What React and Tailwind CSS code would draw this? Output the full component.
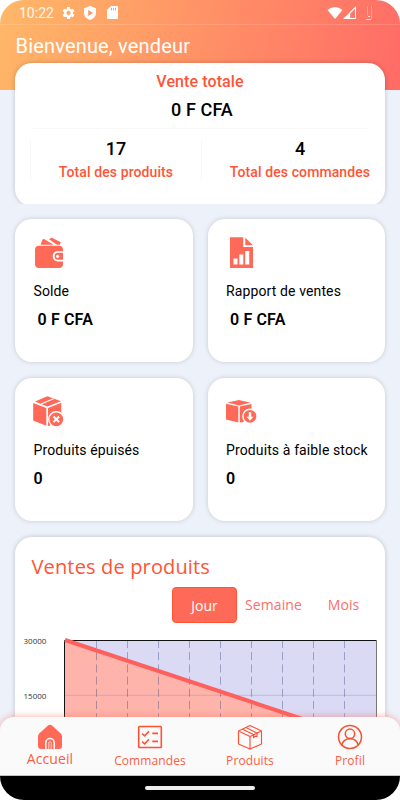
const stats = [
  { label: 'Solde', value: '0 F CFA', icon: WalletIcon, indent: true },
  { label: 'Rapport de ventes', value: '0 F CFA', icon: ReportIcon, indent: true },
  { label: 'Produits épuisés', value: '0', icon: SoldOutIcon },
  { label: 'Produits à faible stock', value: '0', icon: LowStockIcon },
]

const tabs = [
  { label: 'Accueil', icon: HomeIcon, active: true },
  { label: 'Commandes', icon: OrdersIcon },
  { label: 'Produits', icon: ProductsIcon },
  { label: 'Profil', icon: ProfileIcon },
]

const gridColumns = [96.5, 127.5, 158.5, 189.5, 220.5, 251.5, 282.5, 313.5, 344.5]

function WalletIcon() {
  return (
    <svg width="32" height="32" viewBox="0 0 32 32" fill="#ff6957">
      <path d="M6.5 7.700 8.600 2.600Q9 1.800 10 2.100L19.500 7.700Z" />
      <path d="m15 2.300 2-1.400q.6-.4 1.400 0l7.600 3.900q.8.400.5 1.200l-.6 1.700H23Z" />
      <path d="M5 8.800h20q4 0 4 4v1.400h-5.500a4.800 4.800 0 0 0-4.800 4.800v.600a4.800 4.800 0 0 0 4.800 4.800H29V27q0 4-4 4H5q-4 0-4-4V12.800q0-4 4-4Z" />
      <path d="M29 15.800h-5a3.300 3.300 0 0 0-3.300 3.300v.4a3.300 3.300 0 0 0 3.300 3.300h5Z" />
      <circle cx="23.600" cy="19.300" r="1.600" fill="#fff" />
    </svg>
  )
}

function ReportIcon() {
  return (
    <svg width="32" height="32" viewBox="0 0 32 32">
      <path fill="#ff6957" d="M4 .3h13.200v9.700H27v21H4Z M19.300.8 27 8.300h-7.700Z" />
      <path fill="#fff" d="M7.500 21.500h4V27.500h-4Z M13.300 17.500h4v10h-4Z M19.200 14h4v13.500h-4Z" />
    </svg>
  )
}

function SoldOutIcon() {
  return (
    <svg className="-ml-0.5" width="32" height="32" viewBox="-1 0 32 32">
      <path fill="#ff6957" d="M.2 6.900 13.300 12v17.700L.2 24.400Z M15 12l13.300-5.200v14L17 29.500l-2 .5Z" />
      <path fill="#ff6957" d="m2 5.500 12.300 5.100L28 5.200 14.500.2Z" />
      <path stroke="#fff" strokeWidth="1.300" d="M8.200 8 21 2.500" />
      <circle cx="23.300" cy="23.300" r="7.600" fill="#ff6957" stroke="#fff" strokeWidth="1.400" />
      <path stroke="#fff" strokeWidth="2" d="m20.500 20.500 5.600 5.600m0-5.600-5.600 5.600" />
    </svg>
  )
}

function LowStockIcon() {
  return (
    <svg width="32" height="32" viewBox="0 0 32 32">
      <path fill="#ff6957" d="M1.500 6.500 13 4l11.500 2.800L13 9.500Z" />
      <path fill="#ff6957" d="m0 7.800 12.300 2.800v16L0 23.600Z M13.800 10.600 25.500 8v12l-9 6.200-2.700.4Z" />
      <circle cx="24" cy="20.300" r="7.100" fill="#ff6957" stroke="#fff" strokeWidth="1.500" />
      <path fill="#fff" d="M22.800 16.300h2.400v4.500h2.200l-3.400 4-3.400-4h2.200Z" />
    </svg>
  )
}

function HomeIcon() {
  return (
    <svg width="26" height="26" viewBox="0 0 26 26" fill="none">
      <path
        fill="#ff6957"
        d="M11.300 1.300q1.700-1.200 3.400 0l8.800 8q1.500 1.400 1.500 3V22q0 3-3 3H4q-3 0-3-3v-9.700q0-1.600 1.500-3Z"
      />
      <path stroke="#fff" strokeWidth="1.500" d="M8.800 25v-6.300a4.200 4.200 0 0 1 8.400 0V25" />
      <path stroke="#fff" strokeOpacity=".7" strokeWidth="1" d="M11.800 25v-6.200a1.200 1.200 0 0 1 2.400 0V25" />
    </svg>
  )
}

function OrdersIcon() {
  return (
    <svg width="26" height="26" viewBox="0 0 26 26" fill="none" stroke="#ff5232" strokeWidth="1.600">
      <rect x="1.700" y="2.500" width="22.600" height="21" rx=".8" />
      <path d="m5 9.500 2.700 2.300L12 7.200M5 17.500l2.700 2.300 4.300-4.600M15.300 9.400h5.700M15.300 17.400h5.700" />
    </svg>
  )
}

function ProductsIcon() {
  return (
    <svg width="26" height="26" viewBox="0 0 26 26" fill="none" stroke="#fb5136" strokeWidth="1.150" strokeLinejoin="round">
      <path d="M13 1.500 24.500 7v13L13 25 1.500 20V7ZM1.500 7 13 12.500 24.500 7M13 12.500V25" />
      <path d="M5.500 5.200 16.500 10.600v3l1.600-1.400 1.900.2V9.100L9 3.500" />
    </svg>
  )
}

function ProfileIcon() {
  return (
    <svg width="26" height="26" viewBox="0 0 26 26" fill="none" stroke="#f8502f" strokeWidth="1.500">
      <circle cx="13" cy="13" r="11.500" />
      <circle cx="13" cy="9.800" r="4.700" />
      <path d="M4.800 21q1.500-6.300 8.200-6.300t8.200 6.300" />
    </svg>
  )
}

function StatusBar() {
  return (
    <div className="flex h-[25px] items-center border-b border-white/15 pt-px pr-[28px] pl-[19px] font-[Roboto] text-sm text-white/90">
      <span>10:22</span>
      <svg className="ml-[8px]" width="13" height="14" viewBox="0 0 24 24" fill="#fff">
        <path
          fillRule="evenodd"
          d="M9.500 1h5l.6 3.300 2 1.200 3.200-1.200 2.500 4.400-2.600 2.100v2.400l2.600 2.100-2.500 4.400-3.200-1.200-2 1.200-.6 3.300h-5l-.6-3.300-2-1.200-3.200 1.200-2.500-4.400 2.600-2.100v-2.400L1.200 8.700l2.500-4.400 3.200 1.200 2-1.200ZM12 8a4 4 0 1 0 0 8 4 4 0 0 0 0-8Z"
        />
      </svg>
      <svg className="ml-[9px]" width="12" height="14" viewBox="0 0 12 14">
        <path fill="#fff" d="M6 0 12 2.200V7q0 4.800-6 7Q0 11.800 0 7V2.200Z" />
        <path fill="#fb9766" d="M4.200 4v6L9 7Z" />
      </svg>
      <svg className="ml-[11px]" width="11" height="13" viewBox="0 0 11 13">
        <path fill="#fff" d="M4 0h6q1 0 1 1v11q0 1-1 1H1q-1 0-1-1V4Z" />
        <path stroke="#fd9d66" d="M4.500 1.800v2.500M6.500 1.800v2.500M8.500 1.800v2.500" />
      </svg>
      <svg className="ml-auto" width="16" height="12" viewBox="0 0 16 12" fill="#fff">
        <path d="M8 12 .5 3Q8-3 15.500 3Z" />
      </svg>
      <svg width="13" height="13" viewBox="0 0 13 13" fill="#fff">
        <path fillRule="evenodd" d="M0 13 13 0v13ZM7.200 7.500V12H12V2.800Z" />
      </svg>
      <svg className="ml-2.5" width="6" height="14" viewBox="0 0 6 14" fill="none" stroke="#fff">
        <path strokeOpacity=".3" d="M1.500 0v10M5.500 0v13" />
        <path strokeOpacity=".8" d="M0 13.500h5M2 10.500h2" />
      </svg>
    </div>
  )
}

function SummaryCard() {
  return (
    <section className="-mx-[15px] -mt-[37px] h-[151px] overflow-hidden px-[15px] pt-[10px]">
      <div className="h-[143px] rounded-[17px] bg-white px-[15px] pt-[8px] text-center font-[Roboto] font-medium shadow-[0_0_5px_rgba(0,0,0,0.2)]">
        <p className="text-[16px] leading-[22px] tracking-[0.1px] text-[#ff5436]">Vente totale</p>
        <p className="mt-[6px] pl-1 text-[18px] leading-[22px] tracking-[0.1px] text-black">0 F CFA</p>
        <div className="mx-[3px] mt-[7px] h-px bg-[#f8f8f8]" />
        <div className="mt-[10px] flex h-[41px]">
          <div className="w-[171px] shrink-0 border-l border-[#f8f8f8]">
            <p className="text-[18px] leading-[20px] text-black">17</p>
            <p className="mt-[3px] text-sm leading-[20px] tracking-[0.1px] whitespace-nowrap text-[#ff5436]">Total des produits</p>
          </div>
          <div className="w-[197px] shrink-0 border-l border-[#f8f8f8]">
            <p className="text-[18px] leading-[20px] text-black">4</p>
            <p className="mt-[3px] text-sm leading-[20px] tracking-[0.1px] whitespace-nowrap text-[#ff5436]">Total des commandes</p>
          </div>
        </div>
      </div>
    </section>
  )
}

function StatCard({ stat }) {
  const Icon = stat.icon
  return (
    <div className="h-[143px] rounded-[17px] bg-white pt-[18px] pl-[18.5px] font-[Roboto] text-black shadow-[0_0_5px_rgba(0,0,0,0.16)]">
      <Icon />
      <p className="mt-[12px] text-sm leading-[20px] tracking-[0.12px] whitespace-nowrap">{stat.label}</p>
      <p className={`mt-[9px] text-base leading-[20px] font-semibold tracking-[0.15px] ${stat.indent ? 'pl-1' : ''}`}>
        {stat.value}
      </p>
    </div>
  )
}

function SalesChart() {
  return (
    <svg className="mt-[7px] block" width="370" height="119" viewBox="15 630 370 119">
      <rect x="65" y="640" width="311" height="110" fill="#dadaf5" />
      <path d="M65 640 402 752v10H65Z" fill="#ffb4ab" />
      <path d="M65 695.300h311" stroke="#8080d0" strokeOpacity=".35" />
      {gridColumns.map((x) => (
        <path key={x} d={`M${x} 640v110`} stroke="#3c4678" strokeOpacity=".4" strokeDasharray="8 4.200" />
      ))}
      <path d="M64.500 750V640.500H376.500" fill="none" stroke="#111" />
      <path d="M376.500 640v110" stroke="#777" />
      <path d="M65 640 402 752" stroke="#ff605d" strokeWidth="4" />
      <g className="font-['Open_Sans']" fontSize="8" fill="#333">
        <text x="23.500" y="644">30000</text>
        <text x="23.500" y="699">15000</text>
      </g>
    </svg>
  )
}

function SalesCard() {
  return (
    <section className="mt-[16px] h-[240px] rounded-t-[17px] bg-white pt-[16px] font-['Open_Sans'] shadow-[0_0_5px_rgba(0,0,0,0.2)]">
      <h2 className="pl-[16.5px] text-[20px] leading-[28px] font-normal tracking-[0.15px] text-[#ff5436]">
        Ventes de produits
      </h2>
      <div className="mt-[6px] flex h-[36px] items-center pl-[157px] text-sm text-[#ff6e6a]">
        <button className="h-[36px] w-[65px] rounded-[4px] border border-[#ff5436] bg-[#ff6957] pt-px text-white">Jour</button>
        <button className="w-[73px] tracking-[0.1px]">Semaine</button>
        <button className="w-[67px] tracking-[0.1px]">Mois</button>
      </div>
      <SalesChart />
    </section>
  )
}

function BottomNav() {
  return (
    <nav className="relative z-10 flex h-[59px] shrink-0 rounded-t-[14px] border-b border-[#b8c7bf] bg-[#fafafa] font-['Open_Sans'] shadow-[0_-1px_6px_rgba(255,105,87,0.45)]">
      {tabs.map((tab) => {
        const Icon = tab.icon
        return (
          <button key={tab.label} className="flex w-[100px] flex-col items-center pt-[7px] text-[#fb5d44]">
            <Icon />
            <span className={tab.active ? 'text-[14px] leading-[18px] tracking-[0.1px]' : 'text-[12px] leading-[21px] tracking-[0.1px]'}>
              {tab.label}
            </span>
          </button>
        )
      })}
    </nav>
  )
}

export default function App() {
  return (
    <div className="h-[800px] w-[400px] bg-white">
      <div className="flex h-[800px] flex-col overflow-hidden rounded-[24px] bg-[#edf1fa]">
        <header className="h-[90px] shrink-0 bg-linear-[105deg,#ffb867,#ff6b66]">
          <StatusBar />
          <h1 className="mt-[9px] pl-[15.5px] font-[Roboto] text-[20px] leading-[24px] tracking-[0.17px] text-white">
            Bienvenue, vendeur
          </h1>
        </header>
        <main className="-mt-[37px] -mb-4 min-h-0 flex-1 overflow-hidden px-[15px] pt-[37px]">
          <SummaryCard />
          <div className="mt-[15px] grid grid-cols-2 gap-x-[15px] gap-y-[16px]">
            {stats.map((stat) => (
              <StatCard key={stat.label} stat={stat} />
            ))}
          </div>
          <SalesCard />
        </main>
        <BottomNav />
        <div className="relative z-10 flex h-6 shrink-0 justify-center bg-black pt-[10px]">
          <div className="h-1 w-[110px] rounded-full bg-[#ededed]" />
        </div>
      </div>
    </div>
  )
}
